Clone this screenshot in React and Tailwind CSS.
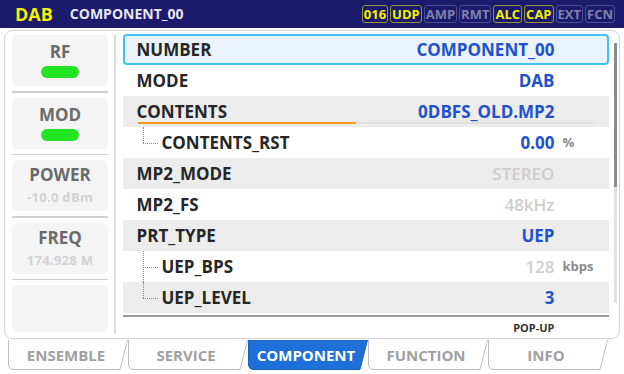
import React from "react";

const badges = [
  { t: "016", on: true },
  { t: "UDP", on: true },
  { t: "AMP", on: false },
  { t: "RMT", on: false },
  { t: "ALC", on: true },
  { t: "CAP", on: true },
  { t: "EXT", on: false },
  { t: "FCN", on: false },
];

const rows = [
  { label: "NUMBER", value: "COMPONENT_00", sel: true },
  { label: "MODE", value: "DAB" },
  { label: "CONTENTS", value: "0DBFS_OLD.MP2", gray: true, progress: true },
  { label: "CONTENTS_RST", value: "0.00", unit: "%", tree: "end" },
  { label: "MP2_MODE", value: "STEREO", gray: true, dim: true },
  { label: "MP2_FS", value: "48kHz", dim: true },
  { label: "PRT_TYPE", value: "UEP", gray: true },
  { label: "UEP_BPS", value: "128", unit: "kbps", dim: true, tree: "mid" },
  { label: "UEP_LEVEL", value: "3", gray: true, tree: "end" },
];

const tabs = ["ENSEMBLE", "SERVICE", "COMPONENT", "FUNCTION", "INFO"];

function Card({ label, pill, sub }) {
  return (
    <div
      className={
        "h-[51px] w-[96px] rounded-[6px] bg-[#f4f4f4] flex flex-col items-center " +
        (sub ? "pt-[4px]" : "pt-[6px]")
      }
    >
      {label && (
        <div className="text-[17px] font-bold leading-[22px] text-[#6a6a6a]">{label}</div>
      )}
      {pill && <div className="mt-[3px] h-[12px] w-[38px] rounded-full bg-[#22e422]" />}
      {sub && (
        <div className="mt-[3px] text-[13px] font-bold leading-[16px] tracking-[0.3px] text-[#d2d2d2]">{sub}</div>
      )}
    </div>
  );
}

function Sep() {
  return <div className="my-[5px] h-[1.5px] w-[96px] bg-[#cfcfcf]" />;
}

function Tree({ kind }) {
  return (
    <div className="relative ml-[20px] mr-[3px] h-full w-[16px]">
      <div
        className={
          "absolute left-0 top-0 w-0 border-l border-dotted border-[#8a8a8a] " +
          (kind === "mid" ? "h-full" : "h-[16px]")
        }
      />
      <div className="absolute left-0 top-[16px] h-0 w-[15px] border-t border-dotted border-[#8a8a8a]" />
    </div>
  );
}

function Row({ r }) {
  const bg = r.sel
    ? "bg-[#eaf3fb] border-2 border-[#3fc3f2] rounded-[4px]"
    : r.gray
    ? "bg-[#ececec]"
    : "bg-white";
  const valColor = r.dim ? "text-[#cdcdcd] font-semibold" : "text-[#2152cc] font-bold";
  return (
    <div className={"relative flex h-[31px] items-center " + bg}>
      {r.tree ? <Tree kind={r.tree} /> : <div className={r.sel ? "w-[12px]" : "w-[14px]"} />}
      <div className="text-[17px] font-bold text-[#262626] leading-none">{r.label}</div>
      <div className={"flex-1 text-right text-[17px] leading-none " + valColor}>{r.value}</div>
      <div className={"pl-[8px] text-[13px] font-bold text-[#8a8a8a] leading-none " + (r.sel ? "w-[52px]" : "w-[54px]")}>
        {r.unit || ""}
      </div>
      {r.progress && (
        <div className="absolute left-[15px] top-[26px] flex h-[2px] w-[456px]">
          <div className="h-full w-[218px] bg-[#f29a1f]" />
          <div className="h-full flex-1 bg-[#e0e0e0]" />
        </div>
      )}
    </div>
  );
}

function Tab({ label, active }) {
  return (
    <div className="relative flex h-[30px] w-[120px] items-center justify-center">
      <svg className="absolute inset-0" width="120" height="30" viewBox="0 0 120 30">
        {active ? (
          <path d="M0.5 0 V24 Q0.5 29.5 6 29.5 H112 L119.5 0 Z" fill="#1f6fd8" stroke="#1a62c4" />
        ) : (
          <path d="M0.5 0 V24 Q0.5 29.5 6 29.5 H112 L119.5 0" fill="white" stroke="#bdbdbd" />
        )}
      </svg>
      <span
        className={
          "relative -ml-[4px] text-[15px] font-bold leading-none " +
          (active ? "text-white" : "text-[#a0a0a0]")
        }
      >
        {label}
      </span>
    </div>
  );
}

export default function App() {
  return (
    <div className="h-[374px] w-[624px] overflow-hidden bg-white font-['Open_Sans',sans-serif]">
      {/* Header */}
      <div className="flex h-[28px] items-center bg-[#1b1a6d] pl-[15px] pr-[9px]">
        <span className="text-[18px] font-bold leading-none text-[#f4f000]">DAB</span>
        <span className="ml-[17px] text-[14px] font-bold leading-none text-[#e8e8f0]">COMPONENT_00</span>
        <div className="ml-auto flex gap-[2px]">
          {badges.map((b) => (
            <div
              key={b.t}
              className={
                "flex h-[18px] items-center rounded-[3px] border-[1.5px] px-[1px] text-[13px] font-bold leading-none " +
                (b.on
                  ? "border-[#9a9430] text-[#f4f000]"
                  : "border-[#4e4e8c] text-[#8080ac]")
              }
            >
              {b.t}
            </div>
          ))}
        </div>
      </div>

      {/* Panel */}
      <div className="mx-[4px] mt-[2px] flex h-[309px] rounded-[8px] border border-[#d4d4d4] bg-white">
        <div className="flex flex-col pl-[7px] pt-[4px]">
          <Card label="RF" pill />
          <Sep />
          <Card label="MOD" pill />
          <Sep />
          <Card label="POWER" sub="-10.0 dBm" />
          <Sep />
          <Card label="FREQ" sub="174.928 M" />
          <Sep />
          <div className="h-[47px] w-[96px] rounded-[6px] bg-[#f4f4f4]" />
        </div>
        <div className="my-[4px] ml-[6px] w-[1.5px] bg-[#dcdcdc]" />
        <div className="ml-[7px] flex w-[486px] flex-col pt-[3px]">
          {rows.map((r) => (
            <Row key={r.label} r={r} />
          ))}
          <div className="mt-[2px] h-[2px] w-full bg-[#9a9a9a]" />
          <div className="mt-[5px] pr-[54px] text-right text-[11px] font-bold leading-none text-[#333]">
            POP-UP
          </div>
        </div>
        <div className="ml-[5px] mt-[12px] flex h-[260px] w-[3px] flex-col bg-[#e2e2e2]">
          <div className="h-[144px] w-full bg-[#8c8c8c]" />
        </div>
      </div>

      {/* Tabs */}
      <div className="mt-[1px] flex pl-[8px]">
        {tabs.map((t) => (
          <Tab key={t} label={t} active={t === "COMPONENT"} />
        ))}
      </div>
    </div>
  );
}
